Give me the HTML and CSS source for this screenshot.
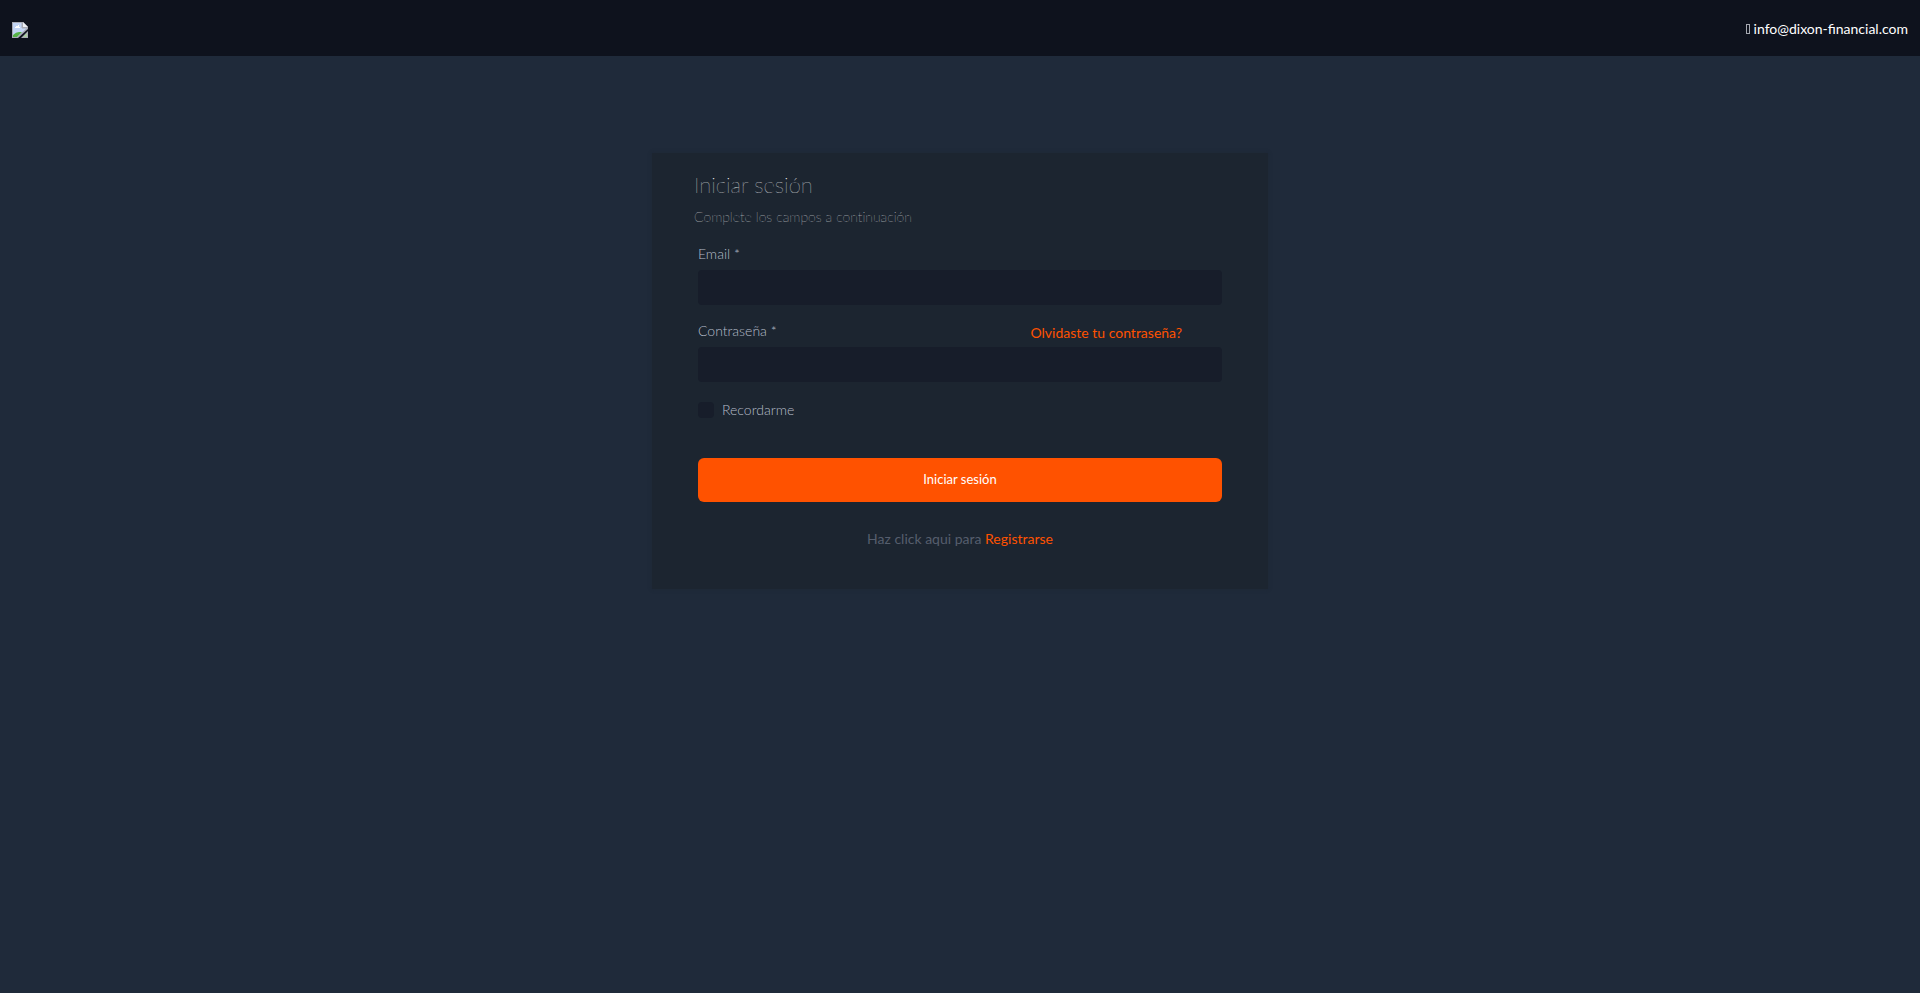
FILE: index.html
```html
<!DOCTYPE html>
<html lang="es">
<head>
<meta charset="utf-8">
<meta name="viewport" content="width=device-width, initial-scale=1">
<title>Iniciar sesión</title>
<link rel="stylesheet" href="styles.css">
</head>
<body>
<header class="topbar">
  <a class="logo" href="#" aria-label="Inicio">
    <svg width="16" height="16" viewBox="0 0 16 16" aria-hidden="true">
      <path d="M0 0H11L16 5V7L6 16H0Z" fill="#a9abb5"/>
      <path d="M1 1H10V6H15L5 15H1Z" fill="#c3d5f5"/>
      <path d="M3 6V5H4V4H6V3H7V5H8V6Z" fill="#fff"/>
      <path d="M1 15V13Q4 10 7 10H10L5 15Z" fill="#56b247"/>
      <path d="M11 0L16 5H11Z" fill="#eef0f5"/>
      <path d="M10 1V6H15" fill="none" stroke="#a9abb5"/>
      <path d="M16 9V16H9Z" fill="#a9abb5"/>
      <path d="M15 11V15H11Z" fill="#a9cf9f"/>
    </svg>
  </a>
  <a class="contact" href="mailto:info@dixon-financial.com"><span class="contact-icon" aria-hidden="true"></span>info@dixon-financial.com</a>
</header>
<main class="page">
  <section class="card">
    <div class="intro">
      <h1 class="title">Iniciar sesión</h1>
      <p class="subtitle">Complete los campos a continuación</p>
    </div>
    <form class="form">
      <div class="field">
        <label class="label" for="email">Email *</label>
        <input class="input" id="email" type="email">
      </div>
      <div class="field">
        <div class="label-row">
          <label class="label" for="password">Contraseña *</label>
          <a class="link forgot" href="#">Olvidaste tu contraseña?</a>
        </div>
        <input class="input" id="password" type="password">
      </div>
      <label class="remember" for="remember"><input class="check" id="remember" type="checkbox">Recordarme</label>
      <button class="submit" type="submit">Iniciar sesión</button>
    </form>
    <p class="register">Haz click aqui para <a class="link" href="#">Registrarse</a></p>
  </section>
</main>
</body>
</html>
```
FILE: styles.css
```css
* {
  box-sizing: border-box;
}

body {
  margin: 0;
  min-height: 100vh;
  background: #1f2a3a;
  font-family: Lato, sans-serif;
  font-size: 14px;
  line-height: 20px;
  color: #b4bcc8;
}

a {
  text-decoration: none;
}

.topbar {
  display: flex;
  align-items: center;
  justify-content: space-between;
  height: 56px;
  padding: 4px 12px 0;
  background: #0e121d;
}

.logo {
  display: flex;
}

.contact {
  display: flex;
  align-items: center;
  gap: 4px;
  padding-bottom: 2px;
  color: #fff;
}

.contact-icon {
  width: 4px;
  height: 10px;
  border: 1px solid #a5a8b0;
}

.page {
  padding: 97px 16px;
}

.card {
  max-width: 616px;
  margin: 0 auto;
  padding: 18px 46px 40px;
  background: #1c2530;
  box-shadow: 0 0 4px rgba(28, 37, 48, 0.4);
}

.intro {
  margin-left: -4px;
}

.title {
  margin: 0 0 8px;
  font-size: 22px;
  line-height: 28px;
  font-weight: 100;
  color: #fff;
}

.subtitle {
  margin: 0 0 17px;
  line-height: 20px;
  font-weight: 100;
  font-variant-ligatures: none;
  color: #fff;
}

.field {
  margin-bottom: 16px;
}

.label {
  display: block;
  height: 26px;
  font-weight: 300;
}

.label-row {
  display: flex;
  justify-content: space-between;
  padding-right: 40px;
}

.link {
  color: #ff5200;
}

.forgot {
  padding-top: 2px;
}

.input {
  display: block;
  width: 100%;
  height: 35px;
  padding: 0 12px;
  border: 0;
  border-radius: 4px;
  background: #171d2a;
  color: #fff;
  font: inherit;
}

.remember {
  display: flex;
  align-items: center;
  gap: 8px;
  margin-top: 18px;
  font-weight: 300;
}

.check {
  appearance: none;
  width: 16px;
  height: 16px;
  margin: 0;
  border-radius: 4px;
  background: #171d2a;
}

.check:checked {
  background: #ff5200;
}

.submit {
  display: block;
  width: 100%;
  height: 44px;
  margin-top: 38px;
  padding: 0 0 2px;
  border: 0;
  border-radius: 6px;
  background: #ff5200;
  color: #fff;
  font: inherit;
  font-size: 13px;
}

.register {
  margin: 27px 0 0;
  text-align: center;
  color: #565e6d;
}
```
